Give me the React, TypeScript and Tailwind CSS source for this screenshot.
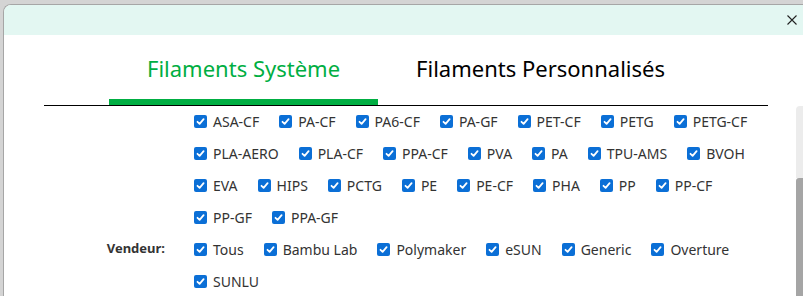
import React from 'react';

const filaments = [
  'ASA-CF', 'PA-CF', 'PA6-CF', 'PA-GF', 'PET-CF', 'PETG', 'PETG-CF',
  'PLA-AERO', 'PLA-CF', 'PPA-CF', 'PVA', 'PA', 'TPU-AMS', 'BVOH',
  'EVA', 'HIPS', 'PCTG', 'PE', 'PE-CF', 'PHA', 'PP', 'PP-CF',
  'PP-GF', 'PPA-GF',
];

const vendors = ['Tous', 'Bambu Lab', 'Polymaker', 'eSUN', 'Generic', 'Overture', 'SUNLU'];

const CheckItem: React.FC<{ label: string }> = ({ label }) => (
  <label className="flex items-center h-[32px] mr-[20px]">
    <span className="flex items-center justify-center w-[13px] h-[13px] rounded-[2px] bg-[#0b6fd6]">
      <svg width="9" height="9" viewBox="0 0 9 9" fill="none">
        <path d="M1.5 4.8 L3.6 6.8 L7.6 2.2" stroke="white" strokeWidth="1.8" strokeLinecap="round" strokeLinejoin="round" />
      </svg>
    </span>
    <span className="ml-[6px] text-[14px] text-[#333]">{label}</span>
  </label>
);

const Section: React.FC<{ title?: string; items: string[] }> = ({ title, items }) => (
  <div className="flex">
    <div className="w-[190px] shrink-0 pr-[29px] h-[32px] flex items-center justify-end">
      {title && <span className="text-[13px] font-bold text-[#333]">{title}</span>}
    </div>
    <div className="flex flex-wrap w-[585px]">
      {items.map((it) => (
        <CheckItem key={it} label={it} />
      ))}
    </div>
  </div>
);

export default function App() {
  return (
    <div className="w-[803px] h-[296px] overflow-hidden bg-[#d4d4d4] pt-[4px] pl-[3px]" style={{ fontFamily: '"Noto Sans", "Open Sans", sans-serif' }}>
      <div className="h-full flex flex-col bg-white border-l border-t border-[#a6a6a6] rounded-tl-[8px] overflow-hidden">
        {/* title bar */}
        <div className="h-[30px] shrink-0 bg-[#e3f7f2] flex items-center justify-end pr-[6px]">
          <svg width="10" height="10" viewBox="0 0 10 10">
            <path d="M0.5 0.5 L9.5 9.5 M9.5 0.5 L0.5 9.5" stroke="#222" strokeWidth="1.1" />
          </svg>
        </div>

        {/* tabs */}
        <div className="ml-[40px] w-[724px] flex justify-center border-b border-black">
          <div className="px-[38px] pt-[18px] pb-[16px] border-b-[6px] border-[#00ae42]">
            <span className="block text-[22px] leading-[30px] text-[#00ae42] whitespace-nowrap">Filaments Système</span>
          </div>
          <div className="px-[38px] pt-[18px] pb-[16px] border-b-[6px] border-transparent">
            <span className="block text-[22px] leading-[30px] text-black whitespace-nowrap">Filaments Personnalisés</span>
          </div>
        </div>

        {/* list + scrollbar */}
        <div className="flex flex-1 min-h-0">
          <div className="flex-1 -mt-[1px]">
            <Section items={filaments} />
            <Section title="Vendeur:" items={vendors} />
          </div>
          <div className="w-[7px] shrink-0 flex flex-col rounded-tl-[4px] overflow-hidden">
            <div className="h-[72px] bg-[#ececec]" />
            <div className="flex-1 bg-[#a5a5a5] rounded-tl-[3px]" />
          </div>
        </div>
      </div>
    </div>
  );
}
